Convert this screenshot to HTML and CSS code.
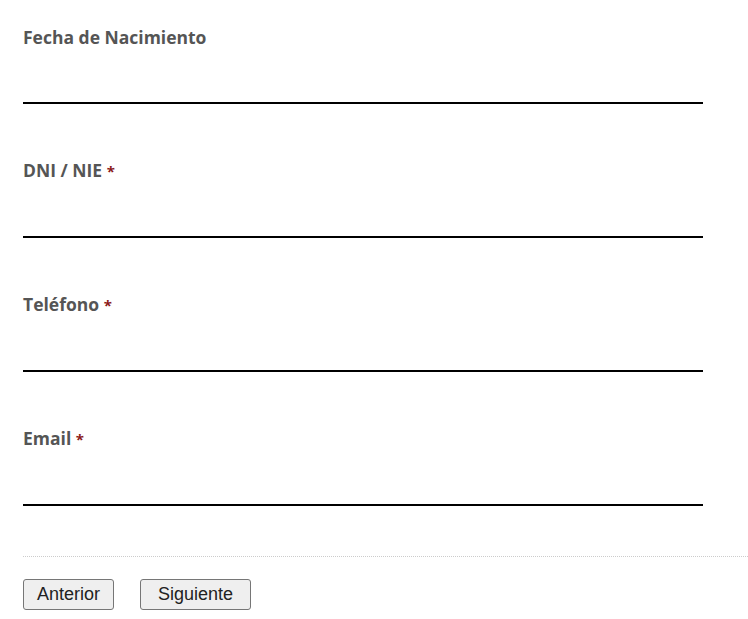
FILE: index.html
```html
<!DOCTYPE html>
<html lang="es">
<head>
    <meta charset="UTF-8">
    <title>Formulario</title>
    <link rel="stylesheet" href="styles.css">
</head>
<body>

    <form class="step-form">
        <div class="field">
            <label for="fecha">Fecha de Nacimiento</label>
            <input type="text" id="fecha">
        </div>
        <div class="field">
            <label for="dni">DNI / NIE <span class="req">*</span></label>
            <input type="text" id="dni">
        </div>
        <div class="field">
            <label for="telefono">Teléfono <span class="req">*</span></label>
            <input type="text" id="telefono">
        </div>
        <div class="field">
            <label for="email">Email <span class="req">*</span></label>
            <input type="text" id="email">
        </div>

        <div class="actions">
            <button type="button">Anterior</button>
            <button type="button" class="next">Siguiente</button>
        </div>
    </form>

</body>
</html>
```

FILE: styles.css
```css
body {
    margin: 0;
    background: #fff;
    font-family: "Open Sans", sans-serif;
}
.step-form {
    padding: 25px 0 0 23px;
}
.field {
    width: 680px;
    margin-bottom: 54px;
}
.field label {
    display: block;
    font-size: 17.5px;
    line-height: 24px;
    font-weight: bold;
    color: #555;
}
.field .req {
    color: #8b1a1a;
    font-size: 15px;
}
.field input {
    display: block;
    box-sizing: border-box;
    width: 680px;
    height: 40px;
    margin-top: 15px;
    padding: 0;
    border: none;
    border-bottom: 2px solid #000;
    outline: none;
    background: transparent;
}
.actions {
    margin-top: -4px;
    padding-top: 22px;
    border-top: 1px dotted #ccc;
    display: flex;
    gap: 26px;
}
.actions button {
    font-family: "Liberation Sans", Arial, sans-serif;
    font-size: 18px;
    line-height: 23px;
    padding: 3px 13px;
    color: #222;
    background: #efefef;
    border: 1px solid #767676;
    border-radius: 3px;
}
.actions .next {
    padding: 3px 17px;
}
```
